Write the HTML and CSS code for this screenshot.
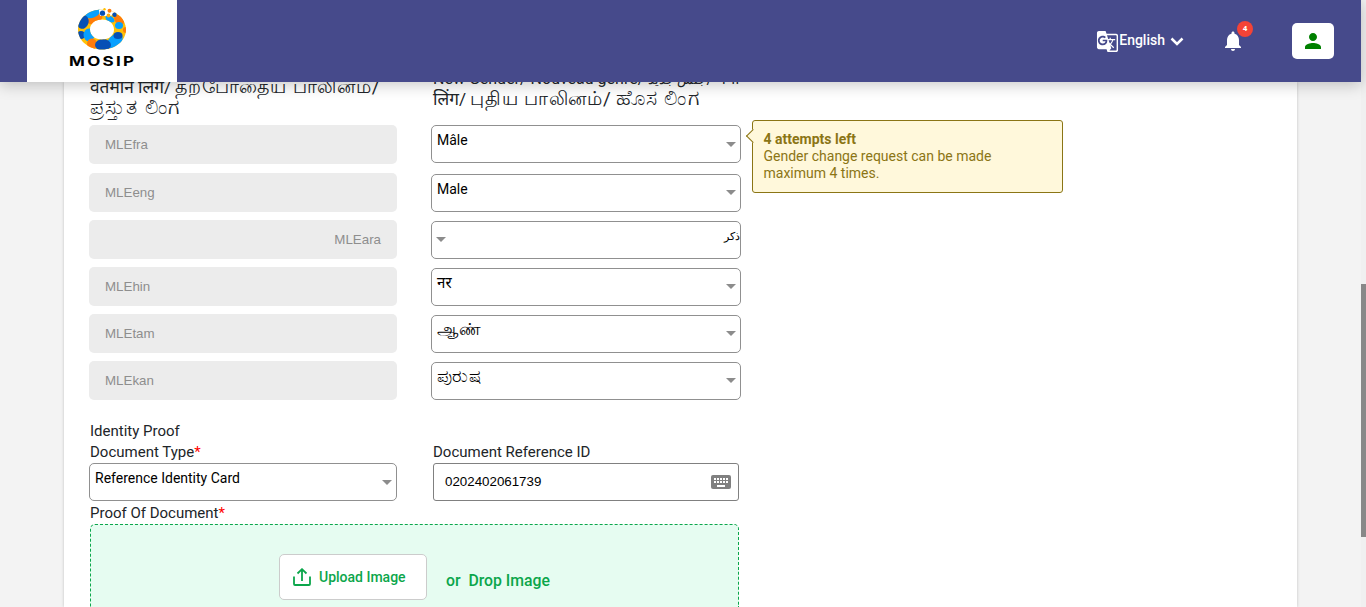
FILE: index.html
```html
<!DOCTYPE html>
<html lang="en">
<head>
<meta charset="utf-8">
<title>MOSIP</title>
<link rel="stylesheet" href="styles.css">
</head>
<body>
<header class="topbar">
  <div class="brand">
    <svg class="brand-mark" viewBox="0 0 48 43" width="48" height="43">
      <defs><clipPath id="ring"><path clip-rule="evenodd" d="M24 1.500C37 1.500 48 10 48 21.500S37 41.500 24 41.500 0 33 0 21.500 11 1.500 24 1.500ZM24 11.500C17 11.500 12 15.500 12 21.500S17 31.500 24 31.500 36 27.500 36 21.500 31 11.500 24 11.500Z"/></clipPath></defs>
      <g clip-path="url(#ring)">
        <rect width="48" height="43" fill="#ffc107"/>
        <ellipse cx="17" cy="11" rx="8" ry="4.500" fill="#ff7c0a" transform="rotate(-25 17 11)"/>
        <ellipse cx="15" cy="5" rx="8" ry="4.500" fill="#08a0ff" transform="rotate(-25 15 5)"/>
        <ellipse cx="5" cy="14" rx="5.500" ry="7" fill="#0750b5" transform="rotate(20 5 14)"/>
        <ellipse cx="3" cy="27" rx="4.500" ry="4" fill="#0750b5"/>
        <ellipse cx="11" cy="27" rx="5.500" ry="6.500" fill="#08a0ff"/>
        <ellipse cx="14" cy="36" rx="5" ry="5.500" fill="#ff7c0a"/>
        <ellipse cx="37" cy="33" rx="9" ry="6" fill="#08a0ff" transform="rotate(-45 37 33)"/>
        <ellipse cx="25" cy="37" rx="8" ry="6" fill="#0750b5"/>
        <ellipse cx="40" cy="27.500" rx="4.500" ry="3.500" fill="#0750b5"/>
        <ellipse cx="32" cy="11" rx="5" ry="3" fill="#08a0ff" transform="rotate(30 32 11)"/>
        <ellipse cx="41" cy="12" rx="6" ry="4" fill="#ff7c0a" transform="rotate(50 41 12)"/>
        <ellipse cx="41" cy="17.500" rx="4" ry="3.500" fill="#08a0ff"/>
        <circle cx="48" cy="22" r="3" fill="#ff7c0a"/>
        <path d="M20.500 0H40L33 8 22 8Z" fill="#fff"/>
      </g>
      <circle cx="24.500" cy="5.200" r="2.600" fill="#0750b5"/><circle cx="31.500" cy="2.800" r="2" fill="#ff7c0a"/><circle cx="26.500" cy="1.200" r="1.200" fill="#ffc107"/><circle cx="36.500" cy="6.800" r="2.200" fill="#0750b5"/><circle cx="30.500" cy="7.500" r="1.900" fill="#ffab07"/>
    </svg>
    <span class="brand-name">MOSIP</span>
  </div>
  <nav class="actions">
    <div class="language">
      <svg viewBox="0 0 24 24" width="23" height="23" fill="#fff"><path d="M21 4H11l-1-3H3c-1.100 0-2 .9-2 2v15c0 1.100.9 2 2 2h8l1 3h9c1.100 0 2-.9 2-2V6c0-1.100-.9-2-2-2zM7 16c-2.760 0-5-2.240-5-5s2.240-5 5-5c1.350 0 2.480.5 3.350 1.300L9.030 8.570c-.38-.36-1.040-.78-2.030-.78-1.740 0-3.150 1.440-3.150 3.210S5.260 14.210 7 14.210c2.010 0 2.840-1.440 2.920-2.410H7v-1.710h4.680c.07.31.12.61.12 1.020C11.800 13.970 9.890 16 7 16zm6.170-5.420h3.700c-.43 1.250-1.110 2.430-2.050 3.470-.31-.35-.6-.72-.86-1.100l-.79-2.370zm8.330 9.920c0 .55-.45 1-1 1H14l2-2.500-1.040-3.100 3.100 3.100.92-.92-3.300-3.250.02-.02c1.130-1.250 1.930-2.690 2.400-4.220H20v-1.300h-4.530V8h-1.290v1.290h-1.440L11.460 5.500h9.040c.55 0 1 .45 1 1v14z"/></svg>
      <span class="language-name">English</span>
      <svg class="chevron" viewBox="0 0 14 10" width="14" height="10"><path d="M1.500 1.500 7 7l5.500-5.500" fill="none" stroke="#fff" stroke-width="2.500"/></svg>
    </div>
    <div class="bell">
      <svg viewBox="0 0 24 24" width="24" height="24" fill="#fff"><path d="M12 22c1.100 0 2-.9 2-2h-4c0 1.100.89 2 2 2zm6-6v-5c0-3.070-1.640-5.640-4.500-6.320V4c0-.83-.67-1.500-1.500-1.500s-1.500.67-1.500 1.500v.68C7.630 5.360 6 7.920 6 11v5l-2 2v1h16v-1l-2-2z"/></svg>
      <span class="badge">4</span>
    </div>
    <div class="profile"><svg viewBox="0 0 24 24" width="24" height="24" fill="green"><path d="M12 12c2.210 0 4-1.790 4-4s-1.790-4-4-4-4 1.790-4 4 1.790 4 4 4zm0 2c-2.670 0-8 1.340-8 4v2h16v-2c0-2.660-5.330-4-8-4z"/></svg></div>
  </nav>
</header>
<main class="page">
  <section class="card">
    <div class="columns labels">
      <div class="label current"><div><span class="hi">वर्तमान लिंग/</span> <span class="ta">தற்போதைய பாலினம்/</span></div><div><span class="kn">ಪ್ರಸ್ತುತ ಲಿಂಗ</span></div></div>
      <div class="label updated"><div>New Gender/ Nouveau genre/ <span class="ar">جنس جديد</span>/ नया</div><div><span class="hi">लिंग/</span> <span class="ta">புதிய பாலினம்/</span> <span class="kn">ಹೊಸ ಲಿಂಗ</span></div></div>
    </div>
    <div class="columns row first">
      <div class="readonly">MLEfra</div><div class="select"><span>Mâle</span></div>
      <aside class="tip"><strong>4 attempts left</strong><br>Gender change request can be made<br>maximum 4 times.</aside>
    </div>
    <div class="columns row"><div class="readonly">MLEeng</div><div class="select"><span>Male</span></div></div>
    <div class="columns row"><div class="readonly end">MLEara</div><div class="select rtl" dir="rtl"><span class="ar">ذكر</span></div></div>
    <div class="columns row"><div class="readonly">MLEhin</div><div class="select"><span class="hi">नर</span></div></div>
    <div class="columns row"><div class="readonly">MLEtam</div><div class="select"><span class="ta">ஆண்</span></div></div>
    <div class="columns row"><div class="readonly">MLEkan</div><div class="select"><span class="kn">ಪುರುಷ</span></div></div>
    <div class="proof">
      <div class="caption">Identity Proof</div>
      <div class="columns">
        <div><div class="caption">Document Type<b>*</b></div><div class="select"><span>Reference Identity Card</span></div></div>
        <div class="reference"><div class="caption">Document Reference ID</div>
          <div class="input"><span>0202402061739</span>
          <svg viewBox="0 0 20 14" width="20" height="14"><path fill="#808080" d="M2 0h16a2 2 0 0 1 2 2v10a2 2 0 0 1-2 2H2a2 2 0 0 1-2-2V2a2 2 0 0 1 2-2Z"/><path d="M3 4h14M3 7h14" stroke="#fff" stroke-width="2" stroke-dasharray="2 1"/><path d="M6 11h8" stroke="#fff" stroke-width="2"/></svg></div>
        </div>
      </div>
      <div class="caption last">Proof Of Document<b>*</b></div>
    </div>
    <div class="dropzone">
      <div class="upload"><svg viewBox="0 0 18 18" width="18" height="18" fill="none" stroke="#0ba64b" stroke-width="1.800"><path d="M1 8.500V16q0 1 1 1H16q1 0 1-1V8.500M9 13V1.500M4.500 5.500 9 1.200 13.500 5.500"/></svg><span>Upload Image</span></div>
      <span class="drop">or&nbsp; Drop Image</span>
    </div>
  </section>
</main>
<div class="scrollbar"><div class="thumb"></div></div>
</body>
</html>
```

FILE: styles.css
```css
* { box-sizing: border-box; }
body { margin: 0; width: 1366px; height: 607px; overflow: hidden; display: grid; grid-template: 82px 525px / 1361px 5px; background: #f3f3f3; font-family: Roboto, "Noto Sans", sans-serif; font-size: 14px; color: #000; }
svg { display: block; flex: none; }
.topbar { position: relative; z-index: 2; grid-column: 1; grid-row: 1; background: #464a8b; display: flex; justify-content: space-between; padding: 0 27px; box-shadow: 0 3px 14px rgba(0,0,0,.22); }
.brand { width: 150px; background: #fff; display: flex; flex-direction: column; align-items: center; padding-top: 8px; }
.brand-name { font: 700 13.500px/14px Inter, sans-serif; letter-spacing: 1.800px; margin: 3px 0 0 1px; transform: scaleX(1.260); }
.actions { display: flex; align-items: center; color: #fff; }
.language { display: flex; align-items: center; font-weight: 500; line-height: 20px; margin-right: 37px; }
.language-name { margin-bottom: 2px; }
.chevron { margin-left: 5px; margin-top: 2px; }
.bell { position: relative; margin-right: 47px; }
.badge { position: absolute; left: 16px; top: -8px; width: 16px; height: 16px; border-radius: 50%; background: #f44336; font: 700 8px/16px Roboto, sans-serif; text-align: center; }
.profile { width: 42px; height: 36px; border-radius: 5px; background: #fff; display: grid; place-items: center; }
.page { grid-column: 1; grid-row: 2; padding: 0 64px; }
.card { height: 525px; background: #fff; box-shadow: 0 0 3px rgba(0,0,0,.2); padding-left: 25px; }
.columns { display: grid; grid-template-columns: 308px 310px 311px; column-gap: 34px; }
.labels { height: 43px; grid-template-rows: 43px; align-items: end; font-size: 16px; line-height: 21px; color: #212529; white-space: nowrap; }
.label { padding-left: 1px; }
.label > div { height: 21px; }
.ta, .kn, .hi, .ar { line-height: 0; }
.ta { font-size: 1.180em; }
.kn { font-size: 1.320em; letter-spacing: .4px; }
.hi { font-size: 1.080em; }
.ar { font-size: .82em; }
.label .ta { letter-spacing: .8px; }
.label .kn { font-size: 1.300em; letter-spacing: 1.200px; }
.current { padding-bottom: 6px; }
.updated { padding: 0 0 15px 2px; }
.row { height: 47px; }
.row.first { height: 48px; }
.readonly { height: 39px; border-radius: 5px; background: #ececec; padding: 0 16px; font: 13.333px/39px "Liberation Sans", sans-serif; color: #8e8e8e; }
.end { text-align: right; }
.select { position: relative; height: 38px; border: 1px solid #909090; border-radius: 5px; padding: 4px 5px; line-height: 20px; background: #fff; }
.row .select { margin-top: 1px; }
.first .select { margin-top: 0; }
.select::after { content: ""; position: absolute; right: 4px; top: 16px; border: 5px solid transparent; border-top-color: #8c8c8c; border-bottom: 0; }
.row:not(.first) .select::after { top: 15px; }
.select.rtl { padding: 3px 0; }
.select.rtl::after { right: auto; left: 4px; }
.tip { position: relative; margin: -5px 0 0 -23px; width: 311px; height: 73px; border: 1px solid #8b7515; border-radius: 3px; background: #fff8db; padding: 10px 10px 10px 10.500px; color: #8b7515; line-height: 17px; }
.tip::before { content: ""; position: absolute; left: -5px; top: 10px; width: 9px; height: 9px; background: #fff8db; border: solid #8b7515; border-width: 0 0 1px 1px; transform: rotate(45deg); }
.proof { margin-top: 13px; }
.caption { font-size: 15px; line-height: 21px; padding-left: 1px; color: #212529; }
.caption b { color: red; font-weight: 400; }
.proof .last { height: 23px; line-height: 25px; }
.proof .columns { height: 59px; }
.reference { padding: 0 2px; }
.reference .caption { padding: 0; }
.input { height: 38px; border: 1px solid #808080; border-radius: 3px; display: flex; align-items: center; justify-content: space-between; padding: 0 7px 0 11px; font: 13.333px "Liberation Sans", sans-serif; }
.input span { margin-bottom: 2px; }
.dropzone { width: 649px; height: 83px; margin-left: 1px; border: 1px dashed #0ba64b; border-bottom: 0; border-radius: 5px 5px 0 0; background: #e6fcf1; padding: 29px 0 0 188px; display: flex; align-items: flex-start; gap: 19px; color: #0ba64b; font-weight: 500; }
.upload { width: 148px; height: 46px; background: #fff; border: 1px solid #ccc; border-radius: 5px; padding-left: 13px; display: flex; align-items: center; gap: 8px; }
.drop { font-size: 15.800px; line-height: 52px; padding-top: 1px; height: 52px; }
.scrollbar { grid-column: 2; grid-row: 1 / 3; background: #f0f0f0; padding-top: 284px; }
.thumb { height: 253px; background: #888; }
```
